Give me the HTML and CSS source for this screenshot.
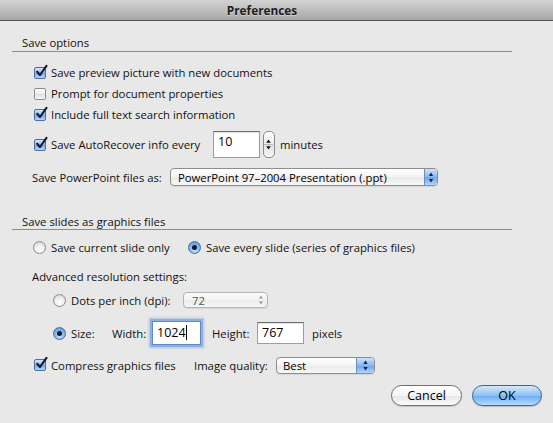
FILE: index.html
```html
<!DOCTYPE html>
<html>
<head>
<meta charset="utf-8">
<title>Preferences</title>
<link rel="stylesheet" href="styles.css">
</head>
<body>
<div class="titlebar">Preferences</div>
<div class="dialog">
  <div class="section-head">Save options</div>

  <div class="row r-first">
    <span class="cb checked"><svg viewBox="0 0 14 14" class="mark"><path d="M3.2 6.8 L6 10 L12.5 0.8"/></svg></span>
    <span>Save preview picture with new documents</span>
  </div>
  <div class="row r-cb">
    <span class="cb"></span>
    <span>Prompt for document properties</span>
  </div>
  <div class="row r-cb">
    <span class="cb checked"><svg viewBox="0 0 14 14" class="mark"><path d="M3.2 6.8 L6 10 L12.5 0.8"/></svg></span>
    <span>Include full text search information</span>
  </div>

  <div class="row r-auto">
    <span class="cb checked"><svg viewBox="0 0 14 14" class="mark"><path d="M3.2 6.8 L6 10 L12.5 0.8"/></svg></span>
    <span class="w-auto">Save AutoRecover info every</span>
    <span class="field f-min">10</span>
    <span class="stepper">
      <svg viewBox="0 0 12 27" width="12" height="27"><path d="M6 8 L3.5 11.5 L8.5 11.5 Z M6 19 L3.5 15.5 L8.5 15.5 Z" fill="#111"/><line x1="1" y1="13.5" x2="11" y2="13.5" stroke="#b5b5b5" stroke-width="1"/></svg>
    </span>
    <span class="minutes">minutes</span>
  </div>

  <div class="row r-ppt">
    <span class="w-ppt">Save PowerPoint files as:</span>
    <span class="popup p-ppt">
      <span class="popup-text">PowerPoint 97–2004 Presentation (.ppt)</span>
      <span class="cap"><svg viewBox="0 0 12 17" width="12" height="17"><path d="M6 3.5 L3.8 7 L8.2 7 Z M6 13.5 L3.8 10 L8.2 10 Z" fill="#12224a"/></svg></span>
    </span>
  </div>

  <div class="section-head s-two">Save slides as graphics files</div>

  <div class="row r-radio">
    <span class="rb"></span>
    <span class="w-cur">Save current slide only</span>
    <span class="rb on"><span class="dot"></span></span>
    <span>Save every slide (series of graphics files)</span>
  </div>

  <div class="adv">Advanced resolution settings:</div>

  <div class="row r-dpi">
    <span class="rb"></span>
    <span class="w-dpi">Dots per inch (dpi):</span>
    <span class="popup p-dpi disabled">
      <span class="popup-text">72</span>
      <span class="cap"><svg viewBox="0 0 12 16" width="12" height="16"><path d="M6 3.5 L4 6.5 L8 6.5 Z M6 12.5 L4 9.5 L8 9.5 Z" fill="#9a9a9a"/></svg></span>
    </span>
  </div>

  <div class="row r-size">
    <span class="rb on"><span class="dot"></span></span>
    <span class="w-size">Size:</span>
    <span class="w-width">Width:</span>
    <span class="field f-w focus">1024<span class="caret"></span></span>
    <span class="w-height">Height:</span>
    <span class="field f-h">767</span>
    <span class="pixels">pixels</span>
  </div>

  <div class="row r-comp">
    <span class="cb checked"><svg viewBox="0 0 14 14" class="mark"><path d="M3.2 6.8 L6 10 L12.5 0.8"/></svg></span>
    <span class="w-comp">Compress graphics files</span>
    <span class="w-iq">Image quality:</span>
    <span class="popup p-iq">
      <span class="popup-text">Best</span>
      <span class="cap"><svg viewBox="0 0 17 17" width="17" height="17"><path d="M8.5 3.5 L6.3 7 L10.7 7 Z M8.5 13.5 L6.3 10 L10.7 10 Z" fill="#12224a"/></svg></span>
    </span>
  </div>

  <div class="buttons">
    <span class="btn cancel">Cancel</span>
    <span class="btn ok">OK</span>
  </div>
</div>
</body>
</html>
```

FILE: styles.css
```css
html, body {
  margin: 0;
  padding: 0;
}
body {
  background: #e8e8e8;
  font-family: "Open Sans", "DejaVu Sans", sans-serif;
  font-size: 11.3px;
  color: #111;
  width: 553px;
  height: 423px;
  overflow: hidden;
}
.titlebar {
  height: 20px;
  line-height: 20px;
  padding-right: 29px;
  text-align: center;
  font-weight: bold;
  font-size: 11.8px;
  color: #1e1e1e;
  background: linear-gradient(#d2d2d2, #bababa 60%, #a6a6a6);
  border-bottom: 1px solid #525252;
  text-shadow: 0 1px 0 rgba(255,255,255,0.4);
}
.dialog {
  padding-left: 12px;
}
.section-head {
  width: 490px;
  padding: 14px 0 1px 10px;
  line-height: 15px;
  border-bottom: 1px solid #8c8c8c;
}
.s-two {
  margin-top: 14px;
  padding-bottom: 0;
}
.row {
  display: flex;
  align-items: center;
  white-space: nowrap;
}
.r-first { margin-top: 10px; height: 21px; padding-left: 22px; }
.r-cb { height: 21px; padding-left: 22px; }
.r-auto { margin-top: 6px; height: 27px; padding-left: 22px; }
.r-ppt { margin-top: 10px; height: 18px; padding-left: 20px; }
.r-radio { margin-top: 7px; height: 20px; padding-left: 21px; }
.adv { margin-top: 12px; line-height: 15px; padding-left: 20px; }
.r-dpi { margin-top: 7px; height: 18px; padding-left: 41px; }
.r-size { margin-top: 12px; height: 24px; padding-left: 41px; }
.r-comp { margin-top: 11px; height: 18px; padding-left: 22px; }

/* checkbox */
.cb {
  position: relative;
  box-sizing: border-box;
  width: 12px;
  height: 12px;
  margin-right: 5px;
  border: 1px solid #8d8d8d;
  border-radius: 2px;
  background: linear-gradient(#ffffff, #ececec 50%, #dedede 51%, #f6f6f6);
  flex: none;
}
.cb.checked {
  border-color: #4d6f9e;
  background: linear-gradient(#d6e6f8, #8fbbeb 50%, #6ea7e6 51%, #b4d6f8);
}
.mark {
  position: absolute;
  left: -1px;
  top: -3px;
  width: 14px;
  height: 14px;
  overflow: visible;
}
.mark path {
  fill: none;
  stroke: #111530;
  stroke-width: 2.1;
  stroke-linecap: round;
  stroke-linejoin: round;
}

/* radio */
.rb {
  position: relative;
  box-sizing: border-box;
  width: 13px;
  height: 13px;
  margin-right: 5px;
  border-radius: 50%;
  border: 1px solid #8a8a8a;
  background: radial-gradient(circle at 50% 70%, #ffffff, #f0f0f0 45%, #d8d8d8 80%);
  flex: none;
}
.rb.on {
  border-color: #4a6c9c;
  background: radial-gradient(circle at 50% 75%, #c6e0fa, #7eb2ea 55%, #5d95d8 90%);
}
.rb .dot {
  position: absolute;
  left: 3px;
  top: 3px;
  width: 5px;
  height: 5px;
  border-radius: 50%;
  background: #0f1a33;
}

/* text fields */
.field {
  position: relative;
  box-sizing: border-box;
  background: #fff;
  border: 1px solid #9d9d9d;
  border-top-color: #6f6f6f;
  box-shadow: inset 0 1px 1px rgba(0,0,0,0.12);
  font-size: 12.5px;
  color: #000;
  padding-left: 4px;
  flex: none;
}
.f-min {
  width: 47px;
  height: 27px;
  line-height: 20px;
}
.f-w {
  width: 49px;
  height: 24px;
  line-height: 22px;
}
.f-h {
  width: 47px;
  height: 22px;
  line-height: 20px;
}
.field.focus {
  border-color: #6488c0;
  box-shadow: 0 0 0 2px #8cb0e2, 0 0 2px 3px rgba(120,160,220,0.5);
}
.caret {
  display: inline-block;
  width: 1px;
  height: 15px;
  background: #000;
  vertical-align: -3px;
}

/* stepper */
.stepper {
  box-sizing: border-box;
  width: 12px;
  height: 27px;
  margin-left: 3px;
  border: 1px solid #8a8a8a;
  border-radius: 5px;
  background: linear-gradient(#ffffff, #ededed 50%, #e0e0e0 51%, #f7f7f7);
  display: flex;
  align-items: center;
  justify-content: center;
  overflow: hidden;
  flex: none;
}
.stepper svg { display: block; margin-left: -1px; }
.minutes { margin-left: 5px; }

/* widths for label columns */
.w-auto { width: 162px; }
.w-ppt { width: 138px; }
.w-cur { width: 137px; }
.w-dpi { width: 112px; }
.w-size { width: 41px; }
.w-width { width: 40px; }
.w-height { width: 45px; margin-left: 11px; }
.pixels { margin-left: 8px; }
.w-comp { width: 143px; }
.w-iq { width: 82px; }

/* popup buttons */
.popup {
  box-sizing: border-box;
  display: flex;
  align-items: stretch;
  border: 1px solid #8e8e8e;
  border-radius: 4px;
  background: linear-gradient(#ffffff, #f4f4f4 50%, #e9e9e9 51%, #f8f8f8);
  box-shadow: 0 1px 1px rgba(0,0,0,0.08);
  overflow: hidden;
  flex: none;
}
.popup-text {
  flex: 1;
  padding-left: 7px;
  color: #000;
  line-height: 15px;
  align-self: center;
}
.cap {
  display: flex;
  align-items: center;
  justify-content: center;
  background: linear-gradient(#cfe2f8, #8ab8ec 50%, #6aa4e6 51%, #b2d5fa);
  border-left: 1px solid #6c8fc0;
}
.cap svg { display: block; }
.p-ppt {
  width: 268px;
  height: 18px;
}
.p-ppt .cap { width: 12px; }
.p-dpi {
  width: 85px;
  height: 16px;
  border-color: #b4b4b4;
  background: linear-gradient(#fbfbfb, #f2f2f2 50%, #ebebeb 51%, #f5f5f5);
}
.p-dpi .popup-text { color: #555; padding-left: 8px; }
.p-dpi .cap {
  width: 12px;
  background: transparent;
  border-left: none;
}
.p-iq {
  width: 99px;
  height: 17px;
}
.p-iq .popup-text { padding-left: 6px; }
.p-iq .cap { width: 17px; }

/* buttons */
.buttons {
  margin-top: 11px;
  display: flex;
  justify-content: flex-end;
  gap: 10px;
  padding-right: 11px;
}
.btn {
  box-sizing: border-box;
  height: 21px;
  line-height: 19px;
  border-radius: 11px;
  text-align: center;
  font-size: 12.5px;
  color: #000;
}
.cancel {
  width: 71px;
  border: 1px solid #6f6f6f;
  background: linear-gradient(#ffffff, #f5f5f5 50%, #e6e6e6 51%, #fbfbfb);
  box-shadow: 0 1px 1px rgba(0,0,0,0.15);
}
.ok {
  width: 70px;
  border: 1px solid #3a629a;
  background: linear-gradient(#d4e8fc, #90c0f0 50%, #6aaaf0 51%, #b6dcfd);
  box-shadow: 0 1px 1px rgba(0,0,0,0.2);
}
```
